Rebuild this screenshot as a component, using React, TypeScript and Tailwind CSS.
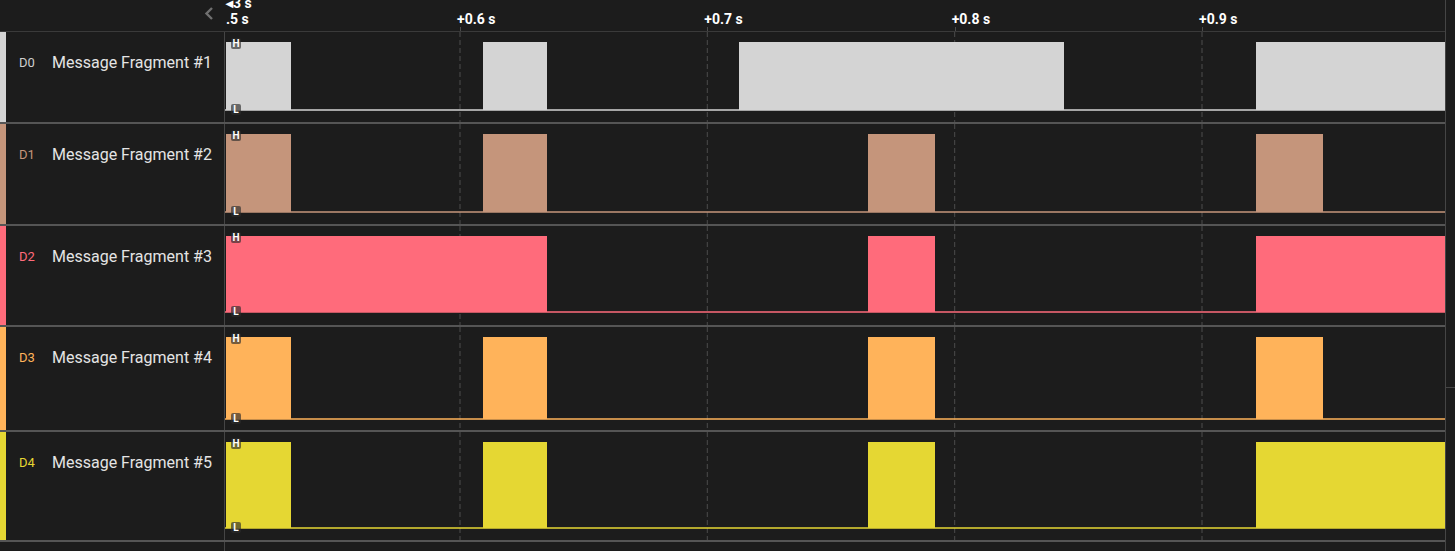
import React from "react";

interface Channel {
  id: string;
  name: string;
  color: string;
  rowClass: string;
  stripeClass: string;
  idClass: string;
  height: number;
  wave: number;
  pulses: [number, number][];
}

const channels: Channel[] = [
  {
    id: "D0",
    name: "Message Fragment #1",
    color: "#d4d4d4",
    rowClass: "h-[90px]",
    stripeClass: "bg-[#d4d4d4]",
    idClass: "text-[#cfcfcf]",
    height: 90,
    wave: 68,
    pulses: [[1, 66], [258, 322], [514, 839], [1031, 1220]],
  },
  {
    id: "D1",
    name: "Message Fragment #2",
    color: "#c5957b",
    rowClass: "h-[100px]",
    stripeClass: "bg-[#c5957b]",
    idClass: "text-[#c5957b]",
    height: 100,
    wave: 78,
    pulses: [[1, 66], [258, 322], [643, 710], [1031, 1098]],
  },
  {
    id: "D2",
    name: "Message Fragment #3",
    color: "#ff6b7b",
    rowClass: "h-[99px]",
    stripeClass: "bg-[#ff6b7b]",
    idClass: "text-[#ff6b7b]",
    height: 99,
    wave: 76,
    pulses: [[1, 322], [643, 710], [1031, 1220]],
  },
  {
    id: "D3",
    name: "Message Fragment #4",
    color: "#ffb35a",
    rowClass: "h-[103px]",
    stripeClass: "bg-[#ffb35a]",
    idClass: "text-[#ffb35a]",
    height: 103,
    wave: 82,
    pulses: [[1, 66], [258, 322], [643, 710], [1031, 1098]],
  },
  {
    id: "D4",
    name: "Message Fragment #5",
    color: "#e5d733",
    rowClass: "h-[108px]",
    stripeClass: "bg-[#e5d733]",
    idClass: "text-[#e5d733]",
    height: 108,
    wave: 86,
    pulses: [[1, 66], [258, 322], [643, 710], [1031, 1220]],
  },
];

// grid ticks, relative to the waveform area's left edge
const ticks = [235, 482.3, 729.7, 977];
const tickLabels = ["+0.6 s", "+0.7 s", "+0.8 s", "+0.9 s"];
const WIDTH = 1220;

function Badge({ letter, top }: { letter: string; top: number }) {
  return (
    <span
      className="absolute left-[6px] flex h-[11px] w-[10px] items-center justify-center rounded-[2px] bg-[#2c2c2c]/65 text-[10px] font-bold leading-none text-white"
      style={{ top }}
    >
      {letter}
    </span>
  );
}

function Waveform({ ch }: { ch: Channel }) {
  const low = 10 + ch.wave;
  return (
    <div className="relative flex-1">
      <svg width={WIDTH} height={ch.height} className="block">
        {ticks.map((x) => (
          <line
            key={x}
            x1={x}
            x2={x}
            y1={0}
            y2={ch.height}
            stroke="#4c4c4c"
            strokeWidth={1}
            strokeDasharray="5 3"
          />
        ))}
        <rect x={0} y={low - 1} width={WIDTH} height={2} fill={ch.color} opacity={0.75} />
        {ch.pulses.map(([a, b]) => (
          <rect key={a} x={a} y={10} width={b - a} height={ch.wave} fill={ch.color} />
        ))}
      </svg>
      <Badge letter="H" top={6} />
      <Badge letter="L" top={low - 6} />
    </div>
  );
}

export default function App() {
  return (
    <div className="flex h-[551px] w-[1455px] overflow-hidden bg-[#1c1c1c] font-['Roboto',sans-serif]">
      <div className="flex w-[1445px] flex-col">
        {/* Time ruler */}
        <div className="flex h-[32px] shrink-0 border-b border-[#3a3a3a]">
          <div className="flex w-[225px] shrink-0 items-start justify-end pr-[11px] pt-[7px]">
            <svg width="10" height="13" viewBox="0 0 10 13">
              <polyline points="8,1 2.5,6.5 8,12" fill="none" stroke="#707070" strokeWidth="2.4" />
            </svg>
          </div>
          <div className="relative flex-1 overflow-hidden text-[14px] font-bold text-white">
            <span className="absolute left-[1px] top-[-5px] leading-[16px]">◂3 s</span>
            <span className="absolute left-[1px] top-[11px] leading-[16px]">.5 s</span>
            {ticks.map((x, i) => (
              <React.Fragment key={x}>
                <span className="absolute top-[11px] leading-[16px]" style={{ left: x - 3 }}>
                  {tickLabels[i]}
                </span>
                <span className="absolute top-[27px] h-[4px] w-px bg-[#4c4c4c]" style={{ left: x }} />
              </React.Fragment>
            ))}
          </div>
        </div>

        {/* Channels */}
        {channels.map((ch) => (
          <div key={ch.id} className="flex shrink-0 flex-col">
            <div className={`flex ${ch.rowClass}`}>
              <div className="flex w-[225px] shrink-0 border-r border-[#454545]">
                <div className={`w-[6px] shrink-0 ${ch.stripeClass}`} />
                <div className="flex items-start pt-[21px]">
                  <span className={`ml-[13px] w-[33px] text-[13px] leading-5 ${ch.idClass}`}>{ch.id}</span>
                  <span className="text-[16px] leading-5 text-[#e4e4e4]">{ch.name}</span>
                </div>
              </div>
              <Waveform ch={ch} />
            </div>
            <div className="h-[2px] bg-[#555555]" />
          </div>
        ))}

        <div className="flex flex-1">
          <div className="w-[225px] border-r border-[#454545]" />
        </div>
      </div>

      {/* Scroll strip */}
      <div className="relative w-[10px] border-l border-[#454545]">
        <div className="absolute left-0 right-0 top-[387px] h-px bg-[#454545]" />
      </div>
    </div>
  );
}
